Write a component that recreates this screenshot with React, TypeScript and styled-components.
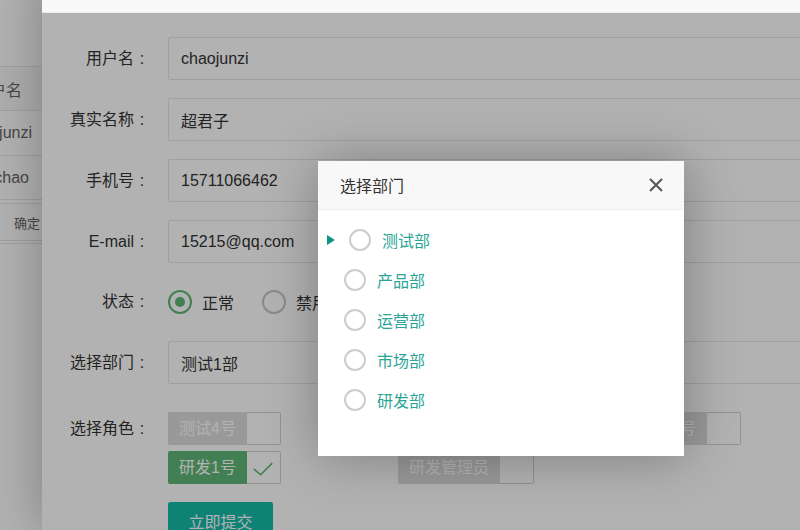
import React from "react";
import styled, { createGlobalStyle } from "styled-components";

const GlobalStyle = createGlobalStyle`
  html, body { margin: 0; padding: 0; background: #fff; }
  body { font-family: "Liberation Sans", "Noto Sans CJK SC", sans-serif; }
  * { box-sizing: border-box; }
`;

const Screen = styled.div`
  position: relative;
  width: 800px;
  height: 530px;
  overflow: hidden;
  background: #fff;
`;

/* ---------- background page (table) ---------- */
const MainPage = styled.div`
  width: 42px;
  padding-top: 66px;
  color: #666;
`;

const TRow = styled.div<{ $h: number; $pr: number; $bg?: string; $size?: number }>`
  height: ${(p) => p.$h}px;
  display: flex;
  align-items: center;
  justify-content: flex-end;
  padding-right: ${(p) => p.$pr}px;
  border-top: 1px solid #e6e6e6;
  background: ${(p) => p.$bg || "#fff"};
  font-size: ${(p) => p.$size || 16}px;
  white-space: nowrap;
  overflow: hidden;
`;

const Shade = styled.div`
  position: absolute;
  inset: 0;
  background: rgba(0, 0, 0, 0.3);
`;

/* ---------- outer dialog ---------- */
const OuterDialog = styled.div`
  position: absolute;
  left: 42px;
  top: -29px;
  bottom: 0;
  width: 900px;
  display: flex;
  flex-direction: column;
  background: #fff;
  box-shadow: 1px 1px 50px rgba(0, 0, 0, 0.3);
`;

const DialogTitle = styled.div`
  flex: none;
  height: 42px;
  background: #f8f8f8;
  border-bottom: 1px solid #eee;
`;

const DialogBody = styled.div`
  position: relative;
  flex: 1;
`;

const Form = styled.div`
  padding-top: 24px;
`;

const FormItem = styled.div<{ $h?: number }>`
  display: flex;
  align-items: flex-start;
  margin-bottom: 18px;
  min-height: ${(p) => p.$h || 43}px;
`;

const Label = styled.div<{ $lh?: number; $pt?: number }>`
  flex: none;
  width: 126px;
  padding-right: 18px;
  padding-top: ${(p) => p.$pt || 0}px;
  text-align: right;
  font-size: 16px;
  line-height: ${(p) => p.$lh || 43}px;
  color: #333;
  white-space: nowrap;
`;

const Colon = styled.span`
  display: inline-block;
  width: 16px;
  text-align: center;
`;

const TextInput = styled.input`
  flex: 1;
  height: 43px;
  margin: 0 40px 0 0;
  padding: 0 12px;
  border: 1px solid #e6e6e6;
  border-radius: 2px;
  background: #fff;
  font-family: inherit;
  font-size: 16px;
  color: #333;
  outline: none;
`;

const RadioGroup = styled.div`
  display: flex;
  align-items: center;
  height: 42px;
`;

const RadioOpt = styled.div`
  display: flex;
  align-items: center;
  margin-right: 28px;
  font-size: 16px;
  color: #333;
`;

const RadioCircle = styled.span<{ $on?: boolean }>`
  flex: none;
  width: 24px;
  height: 24px;
  border-radius: 50%;
  border: 2px solid ${(p) => (p.$on ? "#5fb878" : "#c6c6c6")};
  display: flex;
  align-items: center;
  justify-content: center;
  margin-right: 10px;
  &::after {
    content: "";
    display: ${(p) => (p.$on ? "block" : "none")};
    width: 10px;
    height: 10px;
    border-radius: 50%;
    background: #5fb878;
  }
`;

const RoleGrid = styled.div`
  display: grid;
  grid-template-columns: repeat(3, 230px);
  row-gap: 6px;
  margin-top: 10px;
`;

const Check = styled.div`
  display: inline-flex;
  height: 33px;
  justify-self: start;
`;

const CheckText = styled.span<{ $on?: boolean }>`
  padding: 0 11px;
  line-height: 33px;
  font-size: 16px;
  color: #fff;
  background: ${(p) => (p.$on ? "#5fb878" : "#dcdcdc")};
  border-radius: 2px 0 0 2px;
  white-space: nowrap;
`;

const CheckBox = styled.span`
  width: 34px;
  height: 33px;
  border: 1px solid #d2d2d2;
  border-left: none;
  border-radius: 0 2px 2px 0;
  display: flex;
  align-items: center;
  justify-content: center;
`;

const SubmitRow = styled.div`
  padding-left: 126px;
`;

const SubmitButton = styled.button`
  width: 105px;
  height: 38px;
  border: none;
  border-radius: 2px;
  background: #16baaa;
  color: #fff;
  font-family: inherit;
  font-size: 16px;
  padding: 0;
`;

/* ---------- inner modal ---------- */
const Modal = styled.div`
  position: absolute;
  left: 276px;
  top: 148px;
  width: 366px;
  height: 295px;
  background: #fff;
  box-shadow: 1px 1px 50px rgba(0, 0, 0, 0.3);
  display: flex;
  flex-direction: column;
`;

const ModalHead = styled.div`
  flex: none;
  height: 49px;
  display: flex;
  align-items: center;
  justify-content: space-between;
  padding: 0 21px 0 22px;
  background: #f8f8f8;
  border-bottom: 1px solid #eee;
  font-size: 16px;
  color: #333;
`;

const ModalBody = styled.div`
  padding-top: 10px;
`;

const TreeItem = styled.div<{ $leaf?: boolean }>`
  display: flex;
  align-items: center;
  height: 40px;
  padding-left: ${(p) => (p.$leaf ? 26 : 9)}px;
  font-size: 16px;
  color: #2aa597;
`;

const Arrow = styled.span`
  width: 0;
  height: 0;
  border-top: 5px solid transparent;
  border-bottom: 5px solid transparent;
  border-left: 8px solid #119486;
  margin-right: 14px;
`;

const TreeRadio = styled.span`
  width: 22px;
  height: 22px;
  border-radius: 50%;
  border: 2px solid #cccccc;
  margin-right: 11px;
`;

const CloseIcon = () => (
  <svg width="14" height="14" viewBox="0 0 14 14">
    <path d="M1 1 L13 13 M13 1 L1 13" stroke="#555" strokeWidth="2" fill="none" />
  </svg>
);

const CheckMark = () => (
  <svg width="34" height="33" viewBox="0 0 34 33">
    <path d="M7 18 L14 24 L26 12" stroke="#5fb878" strokeWidth="1.6" fill="none" />
  </svg>
);

const fields = [
  { label: "用户名", value: "chaojunzi" },
  { label: "真实名称", value: "超君子" },
  { label: "手机号", value: "15711066462" },
  { label: "E-mail", value: "15215@qq.com" },
];

const roles = [
  { name: "测试4号", on: false },
  { name: "产品1号", on: false },
  { name: "运营1号", on: false },
  { name: "研发1号", on: true },
  { name: "研发管理员", on: false },
];

const depts = ["测试部", "产品部", "运营部", "市场部", "研发部"];

export default function App() {
  return (
    <>
      <GlobalStyle />
      <Screen>
        <MainPage>
          <TRow $h={44} $pr={20} $bg="#fafafa">用户名</TRow>
          <TRow $h={45} $pr={10}>chaojunzi</TRow>
          <TRow $h={44} $pr={13}>chao</TRow>
          <TRow $h={4} $pr={0} />
          <TRow $h={37} $pr={2} $size={13}>确定</TRow>
          <TRow $h={3} $pr={0} />
          <TRow $h={1} $pr={0} />
        </MainPage>
        <Shade />
        <OuterDialog>
          <DialogTitle />
          <DialogBody>
            <Form>
              {fields.map((f) => (
                <FormItem key={f.label}>
                  <Label>
                    {f.label}
                    <Colon>:</Colon>
                  </Label>
                  <TextInput readOnly defaultValue={f.value} />
                </FormItem>
              ))}
              <FormItem $h={42}>
                <Label $lh={42}>
                  状态<Colon>:</Colon>
                </Label>
                <RadioGroup>
                  <RadioOpt>
                    <RadioCircle $on />
                    正常
                  </RadioOpt>
                  <RadioOpt>
                    <RadioCircle />
                    禁用
                  </RadioOpt>
                </RadioGroup>
              </FormItem>
              <FormItem>
                <Label>
                  选择部门<Colon>:</Colon>
                </Label>
                <TextInput readOnly defaultValue="测试1部" />
              </FormItem>
              <FormItem>
                <Label $lh={33} $pt={10}>
                  选择角色<Colon>:</Colon>
                </Label>
                <RoleGrid>
                  {roles.map((r) => (
                    <Check key={r.name}>
                      <CheckText $on={r.on}>{r.name}</CheckText>
                      <CheckBox>{r.on && <CheckMark />}</CheckBox>
                    </Check>
                  ))}
                </RoleGrid>
              </FormItem>
              <SubmitRow>
                <SubmitButton>立即提交</SubmitButton>
              </SubmitRow>
            </Form>
            <Shade />
            <Modal>
              <ModalHead>
                <span>选择部门</span>
                <CloseIcon />
              </ModalHead>
              <ModalBody>
                {depts.map((d, i) => (
                  <TreeItem key={d} $leaf={i !== 0}>
                    {i === 0 && <Arrow />}
                    <TreeRadio />
                    {d}
                  </TreeItem>
                ))}
              </ModalBody>
            </Modal>
          </DialogBody>
        </OuterDialog>
      </Screen>
    </>
  );
}
